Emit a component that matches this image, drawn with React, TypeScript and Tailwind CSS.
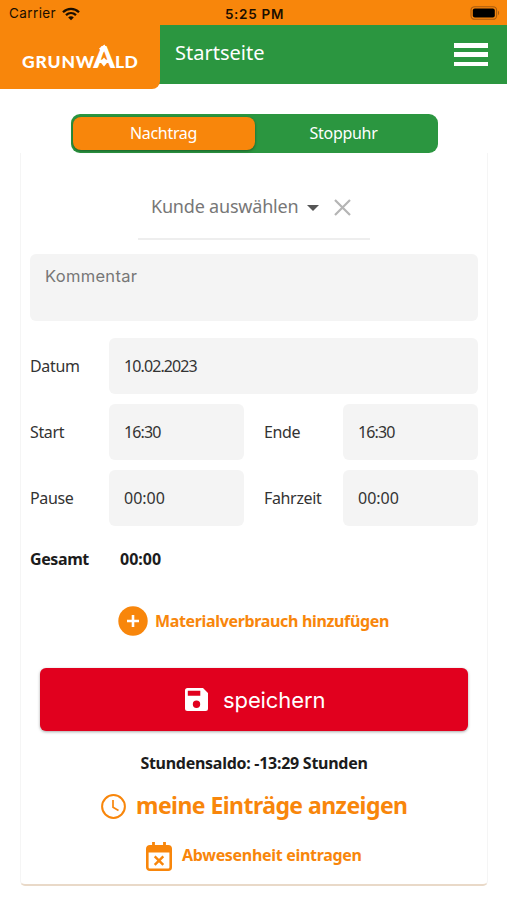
import React from 'react';

const hind = "font-['Noto_Sans','Open_Sans',sans-serif]";

function StatusBar() {
  return (
    <div className="h-[25px] bg-[#f8860b] flex items-center justify-between pl-[9px] pr-[7px] font-['Inter',sans-serif] text-[#1a0e00]">
      <div className="flex-1 flex items-center gap-[6px] text-[13.5px] tracking-[0.4px] pt-[2px]">
        <span>Carrier</span>
        <svg width="18" height="14" viewBox="0 0 18 14" fill="none" stroke="#1a0e00" strokeWidth="2.3">
          <path d="M1 5.2C5.6 .7 12.4 .7 17 5.2" />
          <path d="M4 8.2c2.9-2.7 7.1-2.7 10 0" />
          <path d="M6.2 10.4c1.6-1.5 4-1.5 5.6 0L9 13.2z" fill="#1a0e00" stroke="none" />
        </svg>
      </div>
      <div className="text-[13.5px] font-semibold tracking-[0.7px] pt-[3px]">5:25 PM</div>
      <div className="flex-1 flex justify-end pt-[1px]">
        <svg width="30" height="14" viewBox="0 0 30 14">
          <rect x="1" y=".7" width="25.6" height="12.6" rx="3.6" fill="none" stroke="#a85c10" strokeWidth="1.1" />
          <rect x="2.8" y="2.4" width="22" height="9.2" rx="2" fill="#000" />
          <path d="M28 4.8c1.5.6 1.5 3.8 0 4.4z" fill="#a85c10" />
        </svg>
      </div>
    </div>
  );
}

function Logo() {
  return (
    <div className="flex items-baseline h-[28px] text-white font-['Lato',sans-serif] font-black leading-[28px]">
      <span className="text-[17.5px] tracking-[0.8px]">GRUNW</span>
      <span className="relative text-[31px] w-[22px] -ml-[2px] flex justify-center">
        A
        {/* roof tip and window */}
        <svg className="absolute left-0 top-[2px]" width="22" height="26" viewBox="0 0 22 26">
          <path d="M6 4.500L11.500 .500l3 5-5 3z" fill="#fff" />
          <path d="M11 13.500l3.700 4.500-3.700 4.500-3.700-4.500z" fill="#fff" />
        </svg>
      </span>
      <span className="text-[17.5px] tracking-[0.3px]">LD</span>
    </div>
  );
}

function Header() {
  return (
    <header className="h-[59px] flex items-start bg-[#2b9640]">
      <div className="w-[160px] h-[64px] shrink-0 bg-[#f8860b] rounded-br-[8px] pl-[22px] pt-[17px]">
        <Logo />
      </div>
      <h1 className={`${hind} flex-1 pl-[15px] pt-[14px] text-white text-[20px] leading-[28px]`}>Startseite</h1>
      <button className="mt-[18px] mr-[19px] flex flex-col gap-[4.800px]">
        <span className="w-[34px] h-[4.500px] bg-white"></span>
        <span className="w-[34px] h-[4.500px] bg-white"></span>
        <span className="w-[34px] h-[4.500px] bg-white"></span>
      </button>
    </header>
  );
}

function Field({ label, value, tight }: { label: string; value: string; tight?: boolean }) {
  return (
    <div className="flex-1 flex items-center text-[16px] text-[#333]">
      <div className="w-[79px] tracking-[-0.35px]">{label}</div>
      <div className={`flex-1 h-[56px] rounded-[6px] bg-[#f4f4f4] flex items-center pl-[15px] ${tight ? 'tracking-[-0.9px]' : ''}`}>{value}</div>
    </div>
  );
}

export default function App() {
  return (
    <div className={`${hind} w-[507px] h-[900px] bg-white overflow-hidden`}>
      <StatusBar />
      <Header />

      <main className="pt-[30px]">
        {/* tabs */}
        <div className="ml-[70.500px] w-[367px] h-[39px] rounded-[9px] bg-[#2b9640] p-[3px] pl-[2px] flex text-white text-[16px] leading-[33px] text-center tracking-[-0.3px]">
          <div className="w-[182px] rounded-[8px] bg-[#f8860b] shadow-[0_1px_3px_rgba(0,0,0,0.4)]">Nachtrag</div>
          <div className="flex-1 pr-[2px]">Stoppuhr</div>
        </div>

        {/* card */}
        <div className="ml-[20px] w-[468px] h-[733px] border border-t-0 border-[#f5f5f5] border-b-2 border-b-[#e9d9c8] rounded-b-[5px] px-[9px] flex flex-col">
          <div className="self-center w-[232px] h-[87px] border-b-2 border-[#eee] flex items-center pl-[13px] pt-[21px] text-[#777] text-[18px]">
            <span className="tracking-[-0.2px]">Kunde auswählen</span>
            <svg className="ml-[9px] mt-[3px]" width="12" height="6" viewBox="0 0 12 6"><path d="M0 0h12L6 6z" fill="#555" /></svg>
            <svg className="ml-[15px] mt-[3px]" width="17" height="17" viewBox="0 0 17 17"><path d="M1 1l15 15M16 1L1 16" stroke="#b5b5b5" strokeWidth="2.2" /></svg>
          </div>

          <div className="mt-[14px] h-[67px] rounded-[6px] bg-[#f4f4f4] pl-[15px] pt-[10px] font-['Inter',sans-serif] text-[16.500px] tracking-[0.3px] text-[#777]">Kommentar</div>

          <div className="mt-[17px] flex flex-col gap-[10px]">
            <Field label="Datum" value="10.02.2023" tight />
            <div className="flex gap-[20px]">
              <Field label="Start" value="16:30" tight />
              <Field label="Ende" value="16:30" tight />
            </div>
            <div className="flex gap-[20px]">
              <Field label="Pause" value="00:00" />
              <Field label="Fahrzeit" value="00:00" />
            </div>
          </div>

          <div className="mt-[21px] h-[24px] flex items-center text-[16px] font-bold text-[#1c1c1c]">
            <span className="w-[90px] tracking-[-0.4px]">Gesamt</span>
            <span>00:00</span>
          </div>

          <div className="mt-[35px] h-[30px] flex items-center pl-[88px] gap-[7px] text-[#f8860b]">
            <svg width="30" height="30" viewBox="0 0 30 30">
              <circle cx="15" cy="15" r="14.7" fill="#f8860b" />
              <path d="M15 9v12M9 15h12" stroke="#fff" strokeWidth="2.6" />
            </svg>
            <span className="text-[16px] font-bold tracking-[-0.34px]">Materialverbrauch hinzufügen</span>
          </div>

          <button className="mt-[32px] mx-[10px] h-[63px] shrink-0 rounded-[6px] bg-[#e1001e] shadow-[0_1px_3px_rgba(0,0,0,0.35)] flex items-center pl-[145px] gap-[15px] text-white text-[22px] tracking-[-0.1px] font-['Inter',sans-serif]">
            <svg width="23" height="23" viewBox="0 0 23 23">
              <path fillRule="evenodd" fill="#fff" d="M2.5 0H18l5 5v15.5a2.5 2.5 0 0 1-2.5 2.5h-18A2.5 2.5 0 0 1 0 20.500v-18A2.500 2.500 0 0 1 2.500 0zM2.800 2.800v5h12.500v-5zM11.500 12.500a3.700 3.700 0 1 0 0 7.400 3.700 3.700 0 0 0 0-7.400z" />
            </svg>
            <span className="pt-[1px]">speichern</span>
          </button>

          <div className="mt-[20px] h-[24px] text-center text-[16px] leading-[24px] font-bold tracking-[-0.27px] text-[#1c1c1c]">Stundensaldo: -13:29 Stunden</div>

          <div className="mt-[13px] h-[34px] flex items-center pl-[71px] gap-[10px] text-[#f8860b]">
            <svg className="mt-[2px]" width="25" height="25" viewBox="0 0 25 25" fill="none" stroke="#f8860b" strokeWidth="2">
              <circle cx="12.500" cy="12.500" r="11.400" />
              <path d="M12 6v7.300l5.500 3.200" strokeWidth="1.700" />
            </svg>
            <span className="text-[23px] font-bold tracking-[-0.550px]">meine Einträge anzeigen</span>
          </div>

          <div className="mt-[17px] h-[32px] flex items-center pl-[116px] gap-[10px] text-[#f8860b]">
            <svg className="mt-[2px]" width="26" height="29" viewBox="0 0 26 29" fill="none" stroke="#f8860b">
              <rect x="1.300" y="4.300" width="23.400" height="23.400" rx="2.500" strokeWidth="2.600" />
              <path d="M1 4h24v6.500H1z" fill="#f8860b" stroke="none" />
              <path d="M7.500 0v5M18.500 0v5" strokeWidth="2.800" />
              <path d="M8.700 14.300l8.600 8.600M17.300 14.300l-8.600 8.600" strokeWidth="2.400" />
            </svg>
            <span className="text-[16px] font-bold tracking-[-0.310px]">Abwesenheit eintragen</span>
          </div>
        </div>
      </main>
    </div>
  );
}
